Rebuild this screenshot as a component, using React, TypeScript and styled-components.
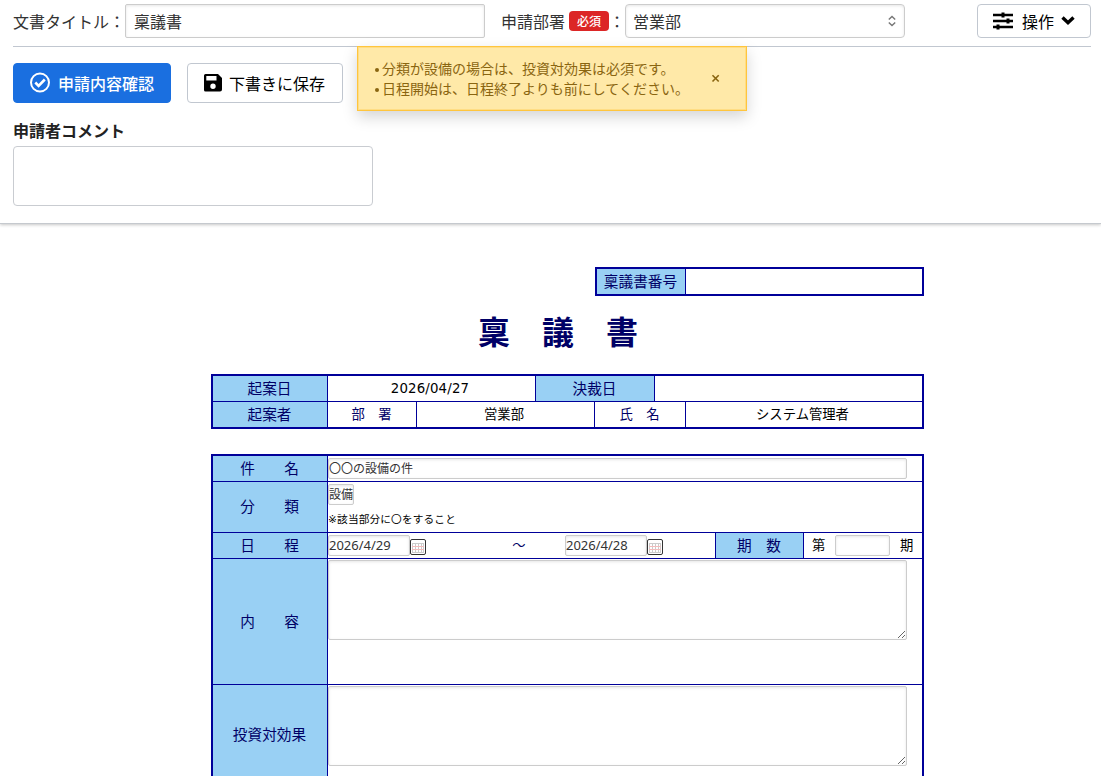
import React from 'react';
import styled, { createGlobalStyle, css } from 'styled-components';

const ui = `'Noto Sans', 'Noto Sans CJK JP', sans-serif`;
const doc = `'DejaVu Sans', 'Noto Sans CJK JP', sans-serif`;
const navy = '#000099';

const GlobalStyle = createGlobalStyle`
  *, *::before, *::after { box-sizing: border-box; }
  body { margin: 0; background: #fff; color: #333; font: 16px/24px 'Noto Sans CJK JP', sans-serif; overflow: hidden; }
`;

const Page = styled.main`
  height: 776px;
  overflow: hidden;
`;

const Header = styled.header`
  height: 224px;
  padding: 4px 10px 0 13px;
  border-bottom: 1px solid #c5c9ce;
  box-shadow: 0 1px 3px rgba(0, 0, 0, 0.22);
`;

const TitleBar = styled.div`
  display: flex;
  align-items: center;
  height: 43px;
  padding-bottom: 8px;
  border-bottom: 1px solid #c1c7d0;
  white-space: nowrap;
`;

const field = css`
  border: 1px solid #ccc;
  background: #fff;
  box-shadow: inset 0 1px 3px rgba(0, 0, 0, 0.1);
`;

const Field = styled.div<{ $w: number; $r: number; $pad?: number }>`
  ${field}
  display: flex;
  align-items: center;
  justify-content: space-between;
  width: ${p => p.$w}px;
  height: 34px;
  padding: 0 8px 0 ${p => p.$pad ?? 8}px;
  border-radius: ${p => p.$r}px;
`;

const DeptLabel = styled.span`
  margin-left: 16px;
`;

const Badge = styled.span`
  width: 40px;
  height: 20px;
  margin-left: 4px;
  border-radius: 4px;
  background: #dc2626;
  color: #fff;
  font-size: 12px;
  font-weight: 500;
  line-height: 20px;
  text-align: center;
`;

const Button = styled.button<{ $w: number; $h: number; $primary?: boolean }>`
  display: flex;
  align-items: center;
  width: ${p => p.$w}px;
  height: ${p => p.$h}px;
  padding: 0 0 0 15px;
  border: 1px solid ${p => (p.$primary ? '#1a6fe0' : '#c1c7d0')};
  border-radius: 4px;
  background: ${p => (p.$primary ? '#1a6fe0' : '#fff')};
  color: ${p => (p.$primary ? '#fff' : '#000')};
  font: ${p => (p.$primary ? 500 : 400)} 16px/24px 'Noto Sans CJK JP', sans-serif;
  white-space: nowrap;
`;

const MenuButton = styled(Button)`
  margin-left: auto;
`;

const Actions = styled.div`
  display: flex;
  gap: 16px;
  padding: 16px 0 15px;
`;

const CommentLabel = styled.div`
  height: 28px;
  color: #222;
  font-size: 16px;
  font-weight: 700;
  line-height: 24px;
`;

const Comment = styled.textarea`
  display: block;
  width: 360px;
  height: 60px;
  border: 1px solid #c9ccd1;
  border-radius: 4px;
  resize: none;
`;

const Alert = styled.div`
  position: absolute;
  top: 46px;
  left: 357px;
  display: flex;
  align-items: center;
  width: 390px;
  height: 65px;
  padding: 0 26px 0 17px;
  border: 1px solid #ffc53d;
  outline: 1px solid #ffc53d55;
  outline-offset: -2px;
  background: #ffe9a8;
  box-shadow: 0 6px 14px rgba(0, 0, 0, 0.17);
  color: #8a6510;
  font-size: 14px;
  line-height: 20px;
  white-space: nowrap;
`;

const AlertList = styled.ul`
  flex: 1;
  margin: 0;
  padding: 0 0 2px;
  list-style: none;
`;

const AlertItem = styled.li`
  display: flex;
  align-items: center;
  gap: 3px;
  &::before {
    content: '';
    width: 4px;
    height: 4px;
    margin-top: 4px;
    border-radius: 50%;
    background: currentColor;
  }
`;

const Document = styled.section`
  display: flex;
  flex-direction: column;
  width: 713px;
  margin: 43px 0 0 211px;
  color: #000;
  font: 13.33px/20px ${doc};
  white-space: nowrap;
`;

const Sheet = styled.div<{ $w?: number; $gap?: number }>`
  align-self: flex-end;
  width: ${p => p.$w ?? 713}px;
  margin-bottom: ${p => p.$gap ?? 0}px;
  border: 2px solid ${navy};
`;

const Row = styled.div<{ $h: number }>`
  display: flex;
  height: ${p => p.$h}px;
  & + & { border-top: 1px solid ${navy}; }
`;

const Cell = styled.div<{ $w?: number; $head?: boolean; $ink?: boolean }>`
  display: flex;
  align-items: center;
  justify-content: center;
  padding-right: ${p => (p.$head || p.$ink ? 1 : 3)}px;
  ${p => (p.$w ? `flex: 0 0 ${p.$w}px;` : 'flex: 1;')}
  ${p => p.$head && `background: #99d0f4; font-size: 14.67px;`}
  color: ${p => (p.$head || p.$ink ? '#000066' : '#000')};
  & + & { border-left: 1px solid ${navy}; }
`;

const InputCell = styled(Cell)<{ $top?: number }>`
  flex-direction: column;
  align-items: flex-start;
  justify-content: flex-start;
  padding-top: ${p => p.$top ?? 1}px;
`;

const LineCell = styled(Cell)`
  justify-content: flex-start;
`;

const DateValue = styled.span`
  letter-spacing: 0.15px;
`;

const Heading = styled.h1`
  margin: 13px 0 16px;
  padding-left: 267px;
  color: #000066;
  font-size: 32px;
  font-weight: 700;
  line-height: 49px;
`;

const SmallField = styled.div<{ $w: number; $size?: number }>`
  ${field}
  flex: none;
  width: ${p => p.$w}px;
  height: 21px;
  border-radius: 2px;
  color: #333;
  font: ${p => p.$size ?? 12}px/19px ${ui};
  overflow: hidden;
`;

const Note = styled.div`
  margin-top: 5px;
  font-size: 10.67px;
  letter-spacing: 0.15px;
`;

const Memo = styled.textarea`
  ${field}
  display: block;
  width: 579px;
  height: 80px;
  border-radius: 2px;
  resize: both;
`;

const Tilde = styled.span`
  width: 139px;
  padding-left: 47px;
  text-align: center;
  color: #000066;
`;

const Term = styled.span`
  width: 31px;
  padding-left: 8px;
`;

const TermEnd = styled.span`
  padding-left: 10px;
`;

const CalendarIcon = () => (
  <svg width="16" height="16" viewBox="0 0 16 16" style={{ marginTop: 3 }}>
    <rect x="0.5" y="0.5" width="15" height="15" rx="1.5" fill="#fff" stroke="#333" />
    <rect x="2" y="4" width="12" height="10" fill="#ccc" />
    <path d="M2 7.5h12M2 10.5h12" stroke="#f3bcbc" />
    <path d="M3 5h2v2h-2zM6 5h2v2h-2zM9 5h2v2h-2zM12 5h1v2h-1zM3 8h2v2h-2zM6 8h2v2h-2zM9 8h2v2h-2zM12 8h1v2h-1zM3 11h2v2h-2zM6 11h2v2h-2zM9 11h2v2h-2zM12 11h1v2h-1z" fill="#fff" />
  </svg>
);

const CheckIcon = () => (
  <svg width="22" height="22" viewBox="0 0 22 22" fill="none" stroke="#fff" strokeWidth="2" style={{ marginRight: 7 }}>
    <circle cx="11" cy="10.5" r="9" />
    <path d="M6.3 10.5l3.3 3.3 6.2-6.3" strokeWidth="2.6" />
  </svg>
);

const SaveIcon = () => (
  <svg width="20" height="20" viewBox="0 0 20 20" style={{ marginRight: 6 }}>
    <path fillRule="evenodd" d="M2.5 1H15l4 4v11.5a2 2 0 0 1-2 2H2.5A1.5 1.5 0 0 1 1 17V2.5A1.5 1.5 0 0 1 2.5 1zM3.3 3v4.5h10.2V3zM10 10.5a2.7 2.7 0 1 0 0 5.4 2.7 2.7 0 0 0 0-5.4z" />
  </svg>
);

const SlidersIcon = () => (
  <svg width="22" height="18" viewBox="0 0 22 18" stroke="#000" strokeWidth="2.6" style={{ marginRight: 7 }}>
    <path d="M0 3h20M0 9h20M0 15h20" />
    <path d="M10 0.5v5M15 6.5v5M5 12.5v5" strokeWidth="3" />
  </svg>
);

const ChevronIcon = () => (
  <svg width="14" height="10" viewBox="0 0 14 10" fill="none" stroke="#000" strokeWidth="3.4" style={{ marginLeft: 7 }}>
    <path d="M1.5 1.5L7 6.7l5.5-5.2" />
  </svg>
);

const SelectIcon = () => (
  <svg width="8" height="12" viewBox="0 0 8 12" fill="none" stroke="#777" strokeWidth="1.4">
    <path d="M0.8 4.6L4 1.4l3.2 3.2M0.8 7.4L4 10.6l3.2-3.2" />
  </svg>
);

const CloseIcon = () => (
  <svg width="9" height="9" viewBox="0 0 9 9" stroke="#8a6510" strokeWidth="1.6">
    <path d="M1.5 1.3l6.2 6.2M7.7 1.3L1.5 7.5" />
  </svg>
);

export default function App() {
  return (
    <Page>
      <GlobalStyle />
      <Header>
        <TitleBar>
          <span>文書タイトル：</span>
          <Field $w={360} $r={2}>稟議書</Field>
          <DeptLabel>申請部署</DeptLabel>
          <Badge>必須</Badge>
          <span>：</span>
          <Field $w={280} $r={4} $pad={7}>営業部<SelectIcon /></Field>
          <MenuButton $w={114} $h={34}><SlidersIcon />操作<ChevronIcon /></MenuButton>
        </TitleBar>
        <Actions>
          <Button $w={158} $h={40} $primary><CheckIcon />申請内容確認</Button>
          <Button $w={156} $h={40}><SaveIcon />下書きに保存</Button>
        </Actions>
        <CommentLabel>申請者コメント</CommentLabel>
        <Comment />
      </Header>
      <Alert>
        <AlertList>
          <AlertItem>分類が設備の場合は、投資対効果は必須です。</AlertItem>
          <AlertItem>日程開始は、日程終了よりも前にしてください。</AlertItem>
        </AlertList>
        <CloseIcon />
      </Alert>

      <Document>
        <Sheet $w={329}>
          <Row $h={25}>
            <Cell $w={88} $head>稟議書番号</Cell>
            <Cell />
          </Row>
        </Sheet>
        <Heading>稟　議　書</Heading>
        <Sheet $gap={25}>
          <Row $h={25}>
            <Cell $w={114} $head>起案日</Cell>
            <Cell $w={208}><DateValue>2026/04/27</DateValue></Cell>
            <Cell $w={119} $head>決裁日</Cell>
            <Cell />
          </Row>
          <Row $h={26}>
            <Cell $w={114} $head>起案者</Cell>
            <Cell $w={89} $ink>部　署</Cell>
            <Cell $w={178}>営業部</Cell>
            <Cell $w={91} $ink>氏　名</Cell>
            <Cell>システム管理者</Cell>
          </Row>
        </Sheet>
        <Sheet>
          <Row $h={25}>
            <Cell $w={114} $head>件　　名</Cell>
            <LineCell><SmallField $w={579}>〇〇の設備の件</SmallField></LineCell>
          </Row>
          <Row $h={51}>
            <Cell $w={114} $head>分　　類</Cell>
            <InputCell $top={2}>
              <SmallField $w={26}>設備</SmallField>
              <Note>※該当部分に〇をすること</Note>
            </InputCell>
          </Row>
          <Row $h={26}>
            <Cell $w={114} $head>日　　程</Cell>
            <LineCell $w={388}>
              <SmallField $w={82} $size={13}>2026/4/29</SmallField>
              <CalendarIcon />
              <Tilde>～</Tilde>
              <SmallField $w={82} $size={13}>2026/4/28</SmallField>
              <CalendarIcon />
            </LineCell>
            <Cell $w={88} $head>期　数</Cell>
            <LineCell>
              <Term>第</Term>
              <SmallField $w={55} />
              <TermEnd>期</TermEnd>
            </LineCell>
          </Row>
          <Row $h={126}>
            <Cell $w={114} $head>内　　容</Cell>
            <InputCell><Memo /></InputCell>
          </Row>
          <Row $h={100}>
            <Cell $w={114} $head>投資対効果</Cell>
            <InputCell><Memo /></InputCell>
          </Row>
        </Sheet>
      </Document>
    </Page>
  );
}
